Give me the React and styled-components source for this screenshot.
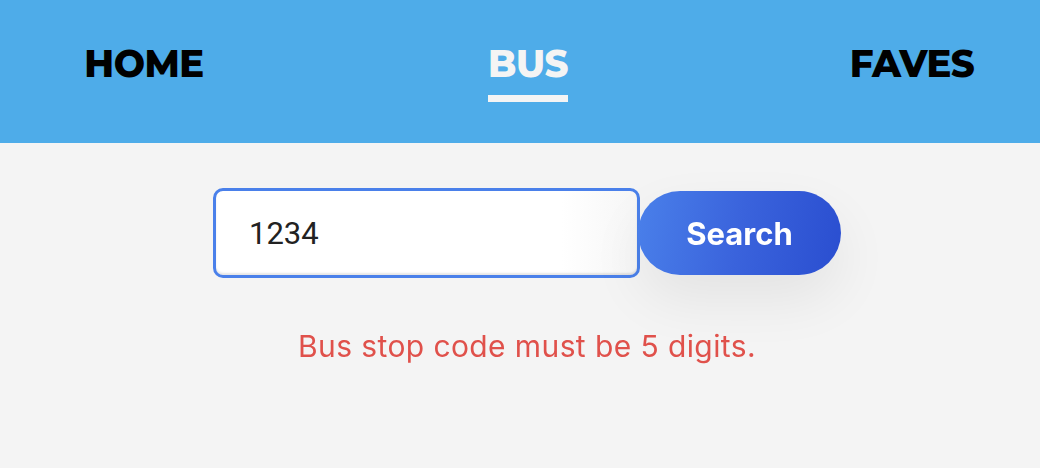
import styled, { createGlobalStyle } from 'styled-components';

const GlobalStyle = createGlobalStyle`
  body {
    margin: 0;
    background: #f4f4f4;
    font-family: "Inter", "Liberation Sans", sans-serif;
  }
`;

const Header = styled.header`
  height: 143px;
  background: #4eace9;
  display: grid;
  grid-template-columns: repeat(3, 240px);
  column-gap: 144px;
  padding-left: 24px;
  align-items: start;
`;

const NavItem = styled.a`
  justify-self: center;
  margin-top: 41px;
  font-family: "Montserrat", "Open Sans", "Liberation Sans", sans-serif;
  font-weight: 800;
  font-size: 37px;
  letter-spacing: -0.5px;
  line-height: 46px;
  color: ${(p) => (p.active ? '#f4f4f4' : '#000')};
  text-decoration: none;
  padding-bottom: 8px;
  border-bottom: 7px solid ${(p) => (p.active ? '#f4f4f4' : 'transparent')};
`;

const Main = styled.main`
  display: flex;
  flex-direction: column;
  align-items: center;
  padding: 45px 0 0 14px;
`;

const SearchRow = styled.form`
  display: flex;
  align-items: center;
`;

const Input = styled.input`
  box-sizing: border-box;
  width: 427px;
  height: 90px;
  border: 3px solid #4a80ea;
  border-radius: 10px;
  background: linear-gradient(90deg, #ffffff 0%, #ffffff 82%, #f6f6f6 100%);
  box-shadow: inset 0 -2px 2px rgba(0, 0, 0, 0.1);
  padding: 0 0 0 33px;
  font-family: "Roboto", "Liberation Sans", sans-serif;
  font-size: 31px;
  color: #222;
  caret-color: #111;
  outline: none;
`;

const Button = styled.button`
  height: 84px;
  width: 203px;
  margin-left: -2px;
  border: none;
  border-radius: 42px;
  background: linear-gradient(100deg, #4a80ea 0%, #3a63dc 50%, #2a4ed0 100%);
  color: #fff;
  font-family: "Inter", "Liberation Sans", sans-serif;
  font-weight: 700;
  font-size: 31px;
  box-shadow: 0 24px 56px rgba(0, 0, 0, 0.07);
  cursor: pointer;
`;

const ErrorText = styled.p`
  margin: 48px 0 0;
  color: #e0514b;
  font-family: "Inter", "Roboto", "Liberation Sans", sans-serif;
  font-size: 30px;
  letter-spacing: 0.4px;
  line-height: 40px;
`;

export default function App() {
  return (
    <>
      <GlobalStyle />
      <Header>
        <NavItem href="#">HOME</NavItem>
        <NavItem href="#" active>BUS</NavItem>
        <NavItem href="#">FAVES</NavItem>
      </Header>
      <Main>
        <SearchRow onSubmit={(e) => e.preventDefault()}>
          <Input defaultValue="1234" autoFocus />
          <Button type="submit">Search</Button>
        </SearchRow>
        <ErrorText>Bus stop code must be 5 digits.</ErrorText>
      </Main>
    </>
  );
}
